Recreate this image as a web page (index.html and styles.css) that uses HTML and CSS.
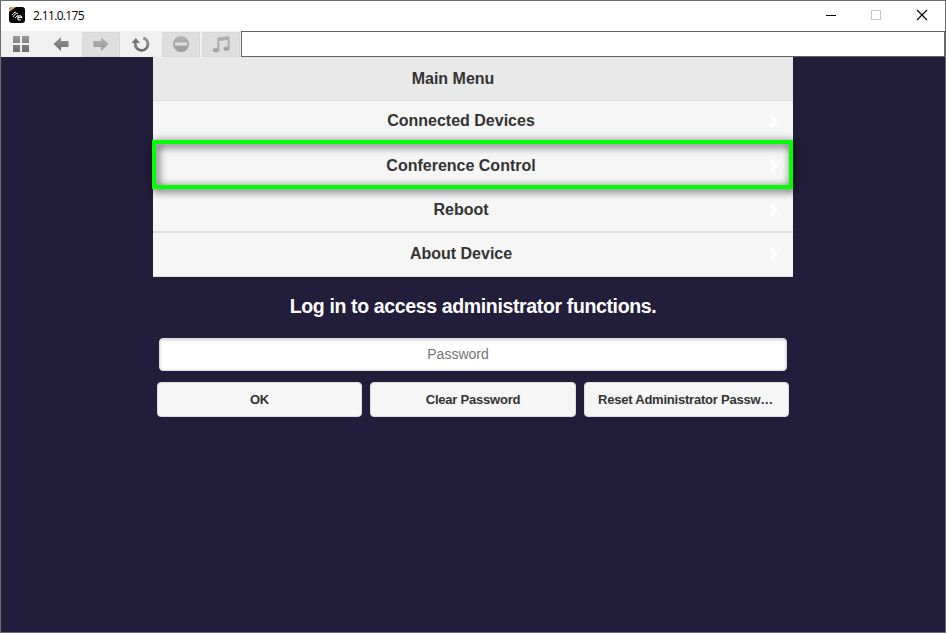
FILE: index.html
```html
<!DOCTYPE html>
<html lang="en">
<head>
<meta charset="utf-8">
<title>2.11.0.175</title>
<link rel="stylesheet" href="styles.css">
</head>
<body>
<div class="window">
  <header class="titlebar">
    <svg class="app-icon" width="16" height="16" viewBox="0 0 16 16">
      <rect width="16" height="16" rx="3" fill="#080808"/>
      <path d="M0 5V3a3 3 0 0 1 3-3h4z" fill="#d0a56c"/>
      <path d="M3 8q2-3 4-3M4 10q2-4 5-4M6 11l3-3" fill="none" stroke="#eee" stroke-width="1"/>
      <path d="M8.600 10.500h4.200a2.100 2.100 0 1 0-1 2.200" fill="none" stroke="#eee" stroke-width="1.200"/>
    </svg>
    <span class="title">2.11.0.175</span>
    <svg class="controls" width="120" height="30" viewBox="0 0 120 30" shape-rendering="crispEdges">
      <path d="M11 14.500h10" stroke="#000" fill="none"/>
      <rect x="56.500" y="9.500" width="9" height="9" stroke="#c8c8c8" fill="none"/>
      <path d="M102 9l10 10M112 9l-10 10" stroke="#000" stroke-width="1.200" fill="none" shape-rendering="auto"/>
    </svg>
  </header>
  <nav class="toolbar">
    <svg width="0" height="0" class="defs"><defs>
      <linearGradient id="dark" x1="0" y1="0" x2="0" y2="1"><stop offset="0" stop-color="#999"/><stop offset="1" stop-color="#6c6c6c"/></linearGradient>
      <linearGradient id="light" x1="0" y1="0" x2="0" y2="1"><stop offset="0" stop-color="#b4b4b4"/><stop offset="1" stop-color="#989898"/></linearGradient>
    </defs></svg>
    <span class="tool"><svg width="18" height="18" viewBox="0 0 18 18" fill="url(#dark)"><path d="M1 1h7v7H1zM10 1h7v7h-7zM1 10h7v7H1zM10 10h7v7h-7z"/></svg></span>
    <span class="tool"><svg width="18" height="18" viewBox="0 0 18 18" fill="url(#dark)"><path d="M1.500 9L9 2v4h7.500v6H9v4z"/></svg></span>
    <span class="tool off"><svg width="18" height="18" viewBox="0 0 18 18" fill="url(#light)"><path d="M16.500 9L9 2v4H1.500v6H9v4z"/></svg></span>
    <span class="tool"><svg width="20" height="18" viewBox="0 0 20 18"><path d="M4.300 6.500v2.300a6.300 6.300 0 1 0 8-5.800" fill="none" stroke="url(#dark)" stroke-width="2.900"/><path d="M.5 8L4.800 3l4.200 5z" fill="#777"/></svg></span>
    <span class="tool off"><svg width="18" height="18" viewBox="0 0 18 18"><circle cx="9" cy="9" r="8" fill="url(#light)"/><path d="M3 7.500h12v3H3z" fill="#dedede"/></svg></span>
    <span class="tool off"><svg width="18" height="18" viewBox="0 0 18 18" fill="url(#light)"><path d="M5.500 2.500L17.500 1v12h-1.700V5L7.200 6v9H5.500z"/><ellipse cx="4" cy="15" rx="3.200" ry="2.200"/><ellipse cx="14.500" cy="13.500" rx="3" ry="2.200"/></svg></span>
    <div class="address"></div>
  </nav>
  <main class="page">
    <ul class="menu">
      <li class="heading">Main Menu</li>
      <li class="item">Connected Devices<svg class="chevron" width="10" height="14" viewBox="0 0 10 14"><path d="M1.500 1.500L7 7l-5.500 5.500"/></svg></li>
      <li class="item selected">Conference Control<svg class="chevron" width="10" height="14" viewBox="0 0 10 14"><path d="M1.500 1.500L7 7l-5.500 5.500"/></svg></li>
      <li class="item lower ruled">Reboot<svg class="chevron" width="10" height="14" viewBox="0 0 10 14"><path d="M1.500 1.500L7 7l-5.500 5.500"/></svg></li>
      <li class="item lower last">About Device<svg class="chevron" width="10" height="14" viewBox="0 0 10 14"><path d="M1.500 1.500L7 7l-5.500 5.500"/></svg></li>
    </ul>
    <h1 class="prompt">Log in to access administrator functions.</h1>
    <input class="password" type="password" placeholder="Password">
    <div class="buttons">
      <button class="btn">OK</button>
      <button class="btn">Clear Password</button>
      <button class="btn">Reset Administrator Password</button>
    </div>
  </main>
</div>
</body>
</html>
```
FILE: styles.css
```css
*, *::after { box-sizing: border-box; }
body { margin: 0; font-family: "Liberation Sans", Arial, sans-serif; }
.window {
  width: 946px;
  height: 633px;
  border: 1px solid #6c6b6e;
  background: #221d3b;
  overflow: hidden;
}
.titlebar {
  height: 30px;
  display: flex;
  align-items: center;
  padding-left: 8px;
  background: #fff;
}
.app-icon { margin-top: -2px; }
.title {
  margin-left: 8px;
  font: 12px/16px "Open Sans", "Noto Sans", sans-serif;
  letter-spacing: -0.65px;
  color: #000;
}
.controls { margin-left: auto; margin-right: 10px; }
.toolbar {
  height: 26px;
  display: flex;
  gap: 2px;
  background: #f0f0f0;
}
.defs { position: absolute; }
.tool {
  width: 38px;
  height: 25px;
  margin-top: 1px;
  padding-bottom: 2px;
  display: flex;
  align-items: center;
  justify-content: center;
  flex: none;
}
.tool:first-of-type { margin-left: 1px; }
.tool.off { background: #dedede; border: 1px solid #d8d8d8; }
.address {
  flex: 1;
  margin-left: -1px;
  background: #fff;
  border: 1px solid #646464;
}
.page { width: 640px; margin-left: 152px; }
.menu {
  margin: 0;
  padding: 0;
  list-style: none;
  font-weight: bold;
  font-size: 16px;
  line-height: 18px;
  text-align: center;
  color: #333;
}
.heading {
  height: 44px;
  padding: 13px 40px 0 0;
  background: #e9e9e9;
  border-bottom: 1px solid #ddd;
}
.item {
  position: relative;
  height: 44px;
  padding: 11px 24px 0 0;
  background: #f6f6f6;
}
.ruled { border-bottom: 2px solid #ddd; }
.last { border-bottom: 1px solid #ddd; }
.selected, .lower { padding-top: 12px; }
.selected { z-index: 1; }
.selected::after {
  content: "";
  position: absolute;
  left: -1px;
  right: 0;
  top: -5px;
  height: 49px;
  border: 4px solid #0f0;
  filter: drop-shadow(2px 2px 4px rgba(0, 0, 0, 0.85));
}
.chevron {
  position: absolute;
  right: 14px;
  top: 13px;
  fill: none;
  stroke: #fff;
  stroke-width: 3;
}
.selected .chevron, .lower .chevron { top: 14px; }
.prompt {
  margin: 18px 0 20px;
  font-size: 19.5px;
  line-height: 23px;
  letter-spacing: -0.36px;
  text-align: center;
  color: #fff;
}
.password {
  display: block;
  width: 628px;
  height: 33px;
  margin: 0 6px;
  padding: 0 35px 1px 5px;
  border: 1px solid #ddd;
  border-radius: 4px;
  background: #fff;
  box-shadow: inset 0 1px 3px rgba(0, 0, 0, 0.2);
  font: 14px "Liberation Sans", Arial, sans-serif;
  text-align: center;
}
.password::placeholder { color: #757575; }
.buttons {
  display: grid;
  grid-template-columns: 205px 206px 205px;
  gap: 8px;
  margin: 11px 4px 0;
}
.btn {
  height: 35px;
  padding: 0 13px;
  border: 1px solid #ddd;
  border-radius: 4px;
  background: #f6f6f6;
  color: #333;
  font: bold 13px "Liberation Sans", Arial, sans-serif;
  letter-spacing: -0.22px;
  overflow: hidden;
  text-overflow: ellipsis;
  white-space: nowrap;
}
```
